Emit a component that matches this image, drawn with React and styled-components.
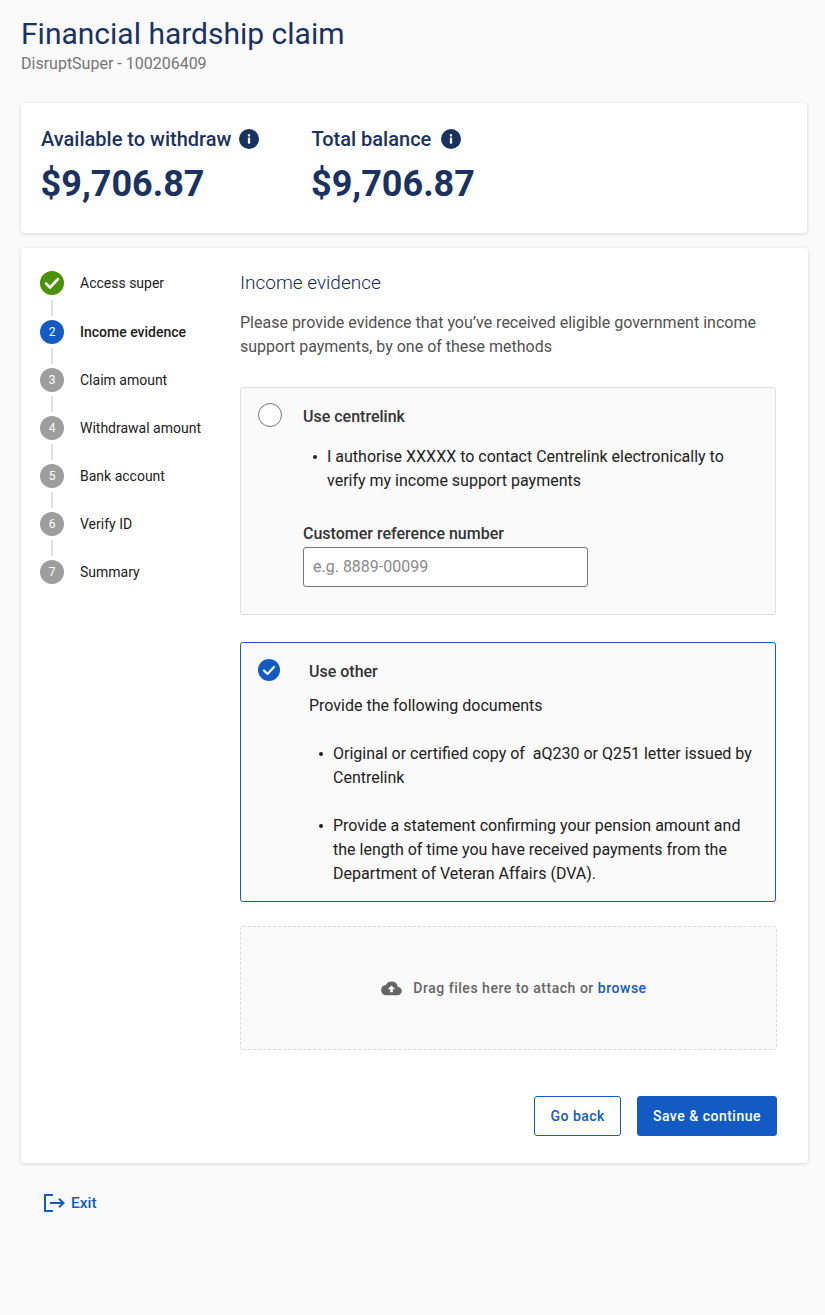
import React from 'react';
import styled, { createGlobalStyle } from 'styled-components';

const Global = createGlobalStyle`
  html, body { margin: 0; padding: 0; background: #fafafa; }
  body { font-family: Roboto, "Liberation Sans", sans-serif; }
  * { box-sizing: border-box; }
`;

const Page = styled.div`
  width: 825px;
  height: 1315px;
  padding: 16px 18px 0 21px;
  overflow: hidden;
`;
const Title = styled.h1`
  margin: 0;
  font-size: 30px;
  line-height: 36px;
  font-weight: 400;
  color: #1a3260;
`;
const Account = styled.div`
  margin-top: 1px;
  font-size: 16px;
  line-height: 22px;
  color: #757575;
`;
const Card = styled.section`
  background: #fff;
  border-radius: 4px;
  box-shadow: 0 1px 4px rgba(0, 0, 0, 0.14);
`;
const SummaryCard = styled(Card)`
  margin-top: 28px;
  height: 130px;
  padding: 24px 20px 0;
  display: flex;
  gap: 52px;
`;
const Stat = styled.div`
  display: flex;
  flex-direction: column;
`;
const StatLabel = styled.div`
  display: flex;
  align-items: center;
  gap: ${p => p.$gap}px;
  font-size: 20px;
  line-height: 24px;
  font-weight: 500;
  color: #1a3260;
`;
const StatValue = styled.div`
  margin: 12px 0 0 -0.4px;
  font-size: 36px;
  line-height: 42px;
  font-weight: 700;
  color: #1a3260;
`;
const MainCard = styled(Card)`
  margin: 15px -1px 0 0;
  height: 915px;
  padding: 23px 31px 0 19px;
  display: flex;
`;
const Steps = styled.ol`
  list-style: none;
  margin: 0;
  padding: 0;
  width: 200px;
  flex: none;
`;
const Step = styled.li`
  display: flex;
  align-items: center;
  gap: 16px;
  height: 24px;
  font-size: 14px;
  color: #212121;
  font-weight: ${p => (p.$active ? 500 : 400)};
  margin-bottom: ${p => (p.$last ? '0' : p.$first ? '25px' : '24px')};
  position: relative;
  ${p => !p.$last && `
    &::after {
      content: '';
      position: absolute;
      left: 11px;
      top: ${p.$first ? 29 : 28}px;
      width: 2px;
      height: 16px;
      background: #e0e0e0;
    }
  `}
`;
const Bullet = styled.span`
  width: 24px;
  height: 24px;
  border-radius: 50%;
  flex: none;
  display: flex;
  align-items: center;
  justify-content: center;
  color: #fff;
  font-size: 12px;
  font-weight: 400;
  background: ${p => p.$bg};
`;
const Content = styled.div`
  flex: 1;
  min-width: 0;
  display: flex;
  flex-direction: column;
`;
const SectionTitle = styled.h2`
  margin: 0;
  font-size: 19px;
  line-height: 24px;
  font-weight: 300;
  color: #0f2a5e;
`;
const Lead = styled.p`
  margin: 16px 0 0;
  font-size: 16px;
  line-height: 24px;
  color: #515151;
`;
const Option = styled.div`
  position: relative;
  margin: ${p => p.$mt}px 1px 0 0;
  height: ${p => p.$h}px;
  background: #fafafa;
  border-radius: 3px;
  border: 1px solid ${p => (p.$selected ? '#135bc2' : '#e0e0e0')};
  padding: ${p => (p.$selected ? '17px 20px 0 68px' : '17px 20px 0 62px')};
  color: #212121;
  font-size: 16px;
  line-height: 24px;
`;
const OptionMark = styled.span`
  position: absolute;
  left: 17px;
  top: ${p => p.$top}px;
  line-height: 0;
`;
const OptionTitle = styled.div`
  font-weight: 500;
  color: #333;
`;
const BulletList = styled.ul`
  list-style: none;
  margin: ${p => p.$mt}px 0 0;
  padding: 0 0 0 ${p => p.$indent}px;
`;
const BulletItem = styled.li`
  position: relative;
  margin-top: ${p => p.$gap || 0}px;
  &::before {
    content: '';
    position: absolute;
    left: -14px;
    top: 10px;
    width: 4px;
    height: 4px;
    border-radius: 50%;
    background: #212121;
  }
`;
const FieldLabel = styled.label`
  display: block;
  margin-top: 29px;
  font-weight: 500;
  color: #333;
`;
const Input = styled.input`
  display: block;
  width: 285px;
  height: 40px;
  margin-top: 1px;
  padding: 0 9px 2px;
  border: 1px solid #757575;
  border-radius: 3px;
  background: #fff;
  font: 400 16px Roboto, sans-serif;
  &::placeholder { color: #8a8a8a; opacity: 1; }
`;
const Plain = styled.div`
  margin-top: 10px;
`;
const DropZone = styled.div`
  margin-top: 24px;
  height: 124px;
  border: 1px dashed #dcdcdc;
  border-radius: 3px;
  background: #fafafa;
  display: flex;
  align-items: center;
  justify-content: center;
  gap: 11px;
  font-size: 14px;
  font-weight: 500;
  letter-spacing: 0.52px;
  color: #666;
  padding: 0 0 0 11px;
`;
const Link = styled.span`
  color: #135bc2;
`;
const Actions = styled.div`
  margin-top: 46px;
  display: flex;
  justify-content: flex-end;
  gap: 16px;
`;
const Button = styled.button`
  height: 40px;
  padding: 0 15px;
  border-radius: 3px;
  border: 1px solid #135bc2;
  background: ${p => (p.$primary ? '#135bc2' : '#fff')};
  color: ${p => (p.$primary ? '#fff' : '#135bc2')};
  font: 500 14px Roboto, sans-serif;
  letter-spacing: 0.5px;
`;
const Exit = styled.a`
  display: inline-flex;
  align-items: center;
  gap: 6px;
  margin: 31px 0 0 23px;
  font-size: 15.5px;
  font-weight: 500;
  color: #135bc2;
`;

const Info = () => (
  <svg width="20" height="20" viewBox="0 0 20 20" aria-hidden="true">
    <circle cx="10" cy="10" r="10" fill="#1a3260" />
    <rect x="8.9" y="8.6" width="2.2" height="6" fill="#fff" />
    <rect x="8.9" y="5.2" width="2.2" height="2.2" fill="#fff" />
  </svg>
);
const Check = ({ size }) => (
  <svg width={size} height={size} viewBox="0 0 24 24" fill="none" aria-hidden="true">
    <path d="M6 12.5l4 4 8-8.5" stroke="#fff" strokeWidth="2.6" strokeLinecap="round" strokeLinejoin="round" />
  </svg>
);
const Cloud = () => (
  <svg width="21" height="15" viewBox="0 0 22 16" aria-hidden="true">
    <path fill="#666" d="M17.7 6A6.9 6.9 0 0 0 11 .6 6.9 6.9 0 0 0 4.9 4.3 5.5 5.5 0 0 0 0 9.8C0 12.8 2.4 15.3 5.5 15.3H17.4C19.9 15.3 22 13.2 22 10.7 22 8.3 20.1 6.2 17.7 6Z" />
    <path fill="#fff" d="M11 4.7l4 4.1h-2.6v3.3H9.6V8.8H7Z" />
  </svg>
);
const ExitIcon = () => (
  <svg width="21" height="18" viewBox="0 0 21 18" fill="none" stroke="#135bc2" strokeWidth="2" aria-hidden="true">
    <path d="M9 1H1v16h8" />
    <path d="M6 9h13.5M15 4.8 19.5 9 15 13.2" />
  </svg>
);

const steps = ['Access super', 'Income evidence', 'Claim amount', 'Withdrawal amount', 'Bank account', 'Verify ID', 'Summary'];

export default function App() {
  return (
    <Page>
      <Global />
      <Title>Financial hardship claim</Title>
      <Account>DisruptSuper - 100206409</Account>
      <SummaryCard>
        <Stat>
          <StatLabel $gap={8}>Available to withdraw <Info /></StatLabel>
          <StatValue>$9,706.87</StatValue>
        </Stat>
        <Stat>
          <StatLabel $gap={10}>Total balance <Info /></StatLabel>
          <StatValue>$9,706.87</StatValue>
        </Stat>
      </SummaryCard>
      <MainCard>
        <Steps>
          {steps.map((s, i) => (
            <Step key={s} $active={i === 1} $first={i === 0} $last={i === steps.length - 1}>
              <Bullet $bg={i === 0 ? '#4c9200' : i === 1 ? '#135bc2' : '#9e9e9e'}>
                {i === 0 ? <Check size={24} /> : i + 1}
              </Bullet>
              {s}
            </Step>
          ))}
        </Steps>
        <Content>
          <SectionTitle>Income evidence</SectionTitle>
          <Lead>Please provide evidence that you’ve received eligible government income support payments, by one of these methods</Lead>
          <Option $mt={28} $h={228}>
            <OptionMark $top={15}>
              <svg width="24" height="24" viewBox="0 0 24 24" aria-hidden="true">
                <circle cx="12" cy="12" r="11.5" fill="#fff" stroke="#757575" />
              </svg>
            </OptionMark>
            <OptionTitle>Use centrelink</OptionTitle>
            <BulletList $mt={16} $indent={24}>
              <BulletItem>I authorise XXXXX to contact Centrelink electronically to verify my income support payments</BulletItem>
            </BulletList>
            <FieldLabel htmlFor="crn">Customer reference number</FieldLabel>
            <Input id="crn" placeholder="e.g. 8889-00099" />
          </Option>
          <Option $selected $mt={27} $h={260}>
            <OptionMark $top={16}>
              <svg width="22" height="22" viewBox="0 0 22 22" aria-hidden="true">
                <circle cx="11" cy="11" r="11" fill="#135bc2" />
                <path d="M6 11.5l3.5 3.5 6.5-7" fill="none" stroke="#fff" strokeWidth="2.2" strokeLinecap="round" strokeLinejoin="round" />
              </svg>
            </OptionMark>
            <OptionTitle>Use other</OptionTitle>
            <Plain>Provide the following documents</Plain>
            <BulletList $mt={24} $indent={24}>
              <BulletItem>Original or certified copy of&nbsp; aQ230 or Q251 letter issued by Centrelink</BulletItem>
              <BulletItem $gap={24}>Provide a statement confirming your pension amount and the length of time you have received payments from the Department of Veteran Affairs (DVA).</BulletItem>
            </BulletList>
          </Option>
          <DropZone>
            <Cloud />
            <span>Drag files here to attach or <Link>browse</Link></span>
          </DropZone>
          <Actions>
            <Button>Go back</Button>
            <Button $primary>Save &amp; continue</Button>
          </Actions>
        </Content>
      </MainCard>
      <Exit><ExitIcon />Exit</Exit>
    </Page>
  );
}
